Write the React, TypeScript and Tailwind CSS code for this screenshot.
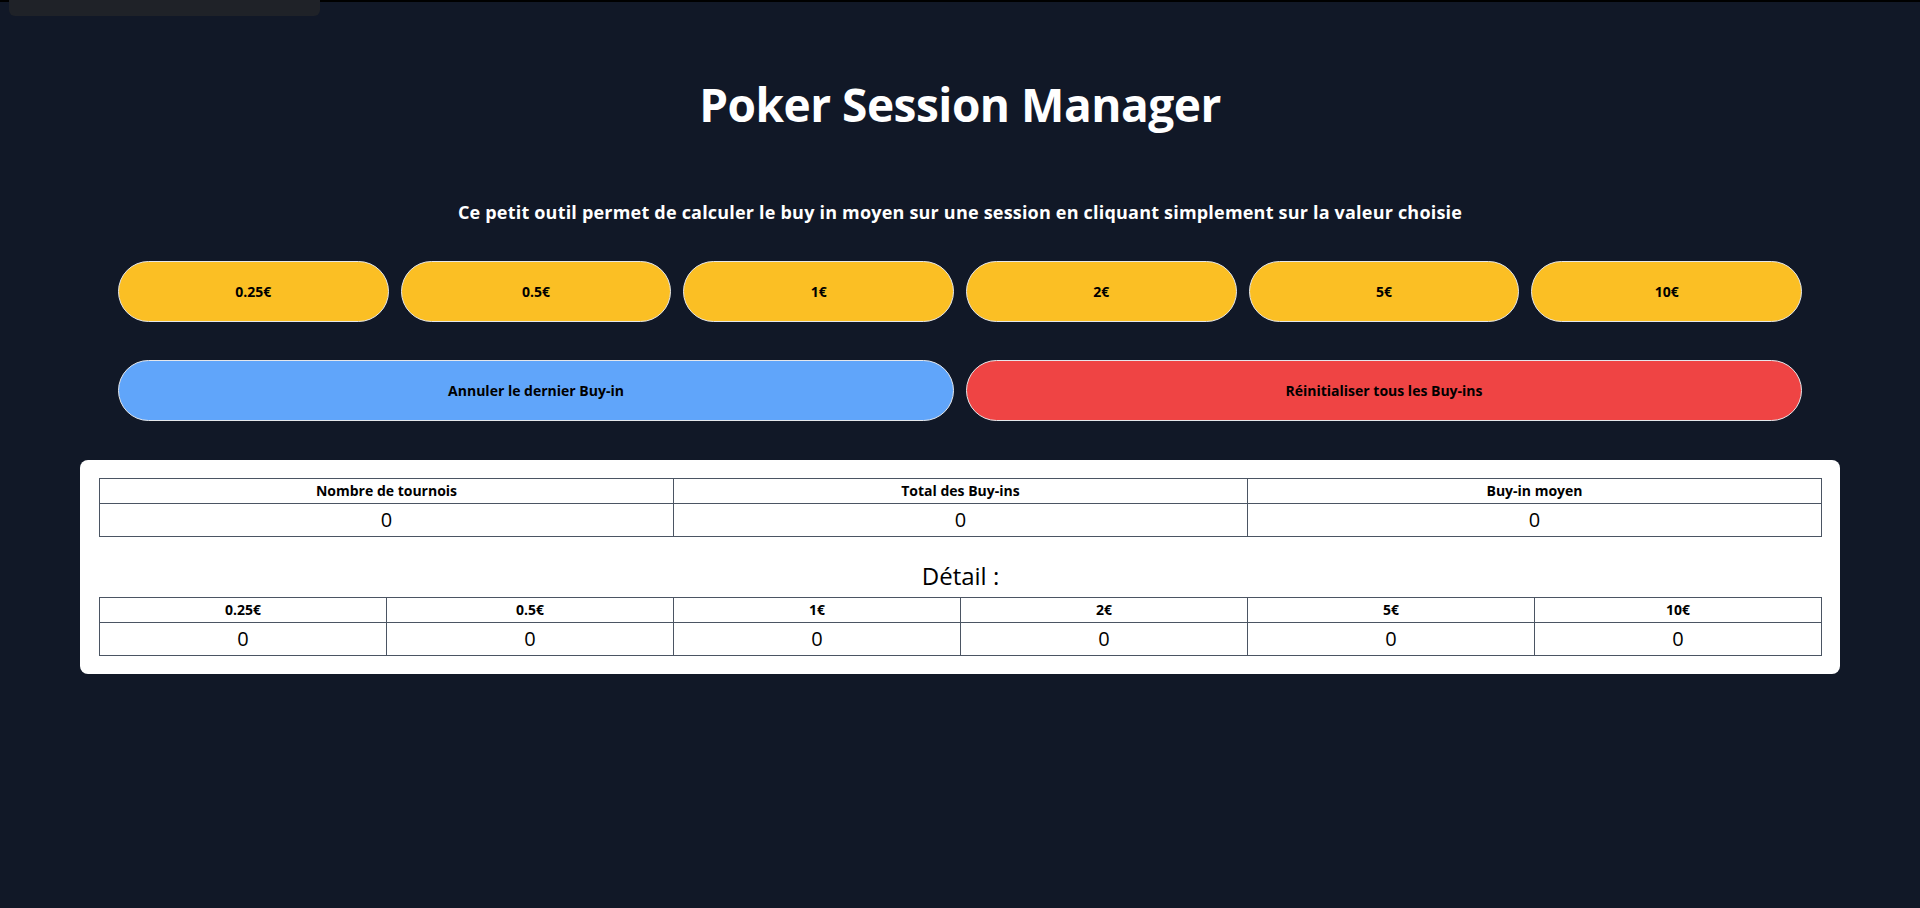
import React, { useState } from "react";

const VALUES = [0.25, 0.5, 1, 2, 5, 10];

const App = () => {
  const [counts, setCounts] = useState<number[]>(VALUES.map(() => 0));
  const [history, setHistory] = useState<number[]>([]);

  const addBuyIn = (i: number) => {
    const next = [...counts];
    next[i] += 1;
    setCounts(next);
    setHistory([...history, i]);
  };

  const undo = () => {
    if (!history.length) return;
    const last = history[history.length - 1];
    const next = [...counts];
    next[last] -= 1;
    setCounts(next);
    setHistory(history.slice(0, -1));
  };

  const reset = () => {
    setCounts(VALUES.map(() => 0));
    setHistory([]);
  };

  const nb = counts.reduce((a, b) => a + b, 0);
  const total = counts.reduce((a, c, i) => a + c * VALUES[i], 0);
  const avg = nb ? Math.round((total / nb) * 100) / 100 : 0;

  return (
    <div className="relative min-h-screen bg-[#111827] font-['Open_Sans','Noto_Sans',sans-serif] text-white">
      <div className="absolute inset-x-0 top-0 h-[2px] bg-black" />
      <div className="absolute left-[9px] top-0 h-[16px] w-[311px] rounded-b-md bg-[#1f2228]" />

      <h1 className="pt-[72px] text-center text-[46px] font-bold leading-[64px] tracking-[-0.5px]">
        Poker Session Manager
      </h1>

      <p className="mt-[64px] text-center text-lg font-bold leading-6 tracking-[0.2px]">
        Ce petit outil permet de calculer le buy in moyen sur une session en cliquant simplement sur la valeur choisie
      </p>

      <div className="mx-auto mt-[37px] w-[1684px]">
        <div className="grid grid-cols-6 gap-3">
          {VALUES.map((v, i) => (
            <button
              key={v}
              onClick={() => addBuyIn(i)}
              className="h-[61px] rounded-full border border-gray-200 bg-[#fbbf24] text-sm font-bold text-black"
            >
              {v}€
            </button>
          ))}
        </div>

        <div className="mt-[38px] grid grid-cols-2 gap-3">
          <button
            onClick={undo}
            className="h-[61px] rounded-full border border-gray-200 bg-[#60a5fa] text-sm font-bold text-black"
          >
            Annuler le dernier Buy-in
          </button>
          <button
            onClick={reset}
            className="h-[61px] rounded-full border border-gray-200 bg-[#ef4444] text-sm font-bold text-black"
          >
            Réinitialiser tous les Buy-ins
          </button>
        </div>
      </div>

      <div className="mx-[80px] mt-[39px] rounded-lg bg-white p-[18px] pl-[19px] text-black">
        <table className="w-full table-fixed border-collapse text-center">
          <thead>
            <tr className="h-[25px]">
              <th className="border border-[#4b5563] text-sm leading-5 font-bold">Nombre de tournois</th>
              <th className="border border-[#4b5563] text-sm leading-5 font-bold">Total des Buy-ins</th>
              <th className="border border-[#4b5563] text-sm leading-5 font-bold">Buy-in moyen</th>
            </tr>
          </thead>
          <tbody>
            <tr className="h-[33px]">
              <td className="border border-[#4b5563] text-xl leading-7 font-normal">{nb}</td>
              <td className="border border-[#4b5563] text-xl leading-7 font-normal">{total}</td>
              <td className="border border-[#4b5563] text-xl leading-7 font-normal">{avg}</td>
            </tr>
          </tbody>
        </table>

        <div className="pt-[23px] pb-[5px] text-center text-2xl leading-8">Détail :</div>

        <table className="w-full table-fixed border-collapse text-center">
          <thead>
            <tr className="h-[25px]">
              {VALUES.map((v) => (
                <th key={v} className="border border-[#4b5563] text-sm leading-5 font-bold">
                  {v}€
                </th>
              ))}
            </tr>
          </thead>
          <tbody>
            <tr className="h-[33px]">
              {counts.map((c, i) => (
                <td key={i} className="border border-[#4b5563] text-xl leading-7 font-normal">
                  {c}
                </td>
              ))}
            </tr>
          </tbody>
        </table>
      </div>
    </div>
  );
};

export default App;
